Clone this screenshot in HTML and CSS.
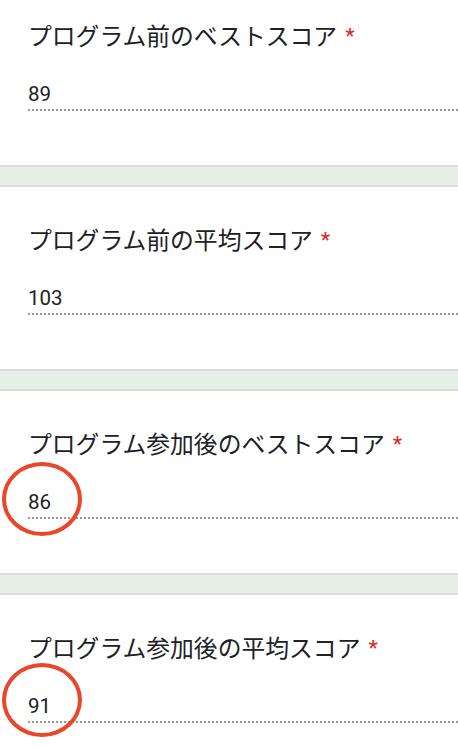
FILE: index.html
```html
<!doctype html>
<html lang="ja">
<head>
    <meta charset="utf-8">
    <title>スコア入力</title>
    <link rel="stylesheet" href="styles.css">
</head>
<body>
    <div class="form-list">
        <div class="question">
            <div class="label">プログラム前のベストスコア<span class="req">*</span></div>
            <div class="field">89</div>
        </div>
        <div class="question">
            <div class="label">プログラム前の平均スコア<span class="req">*</span></div>
            <div class="field">103</div>
        </div>
        <div class="question">
            <div class="label">プログラム参加後のベストスコア<span class="req">*</span></div>
            <div class="field">
                <span class="mark"></span>86
            </div>
        </div>
        <div class="question">
            <div class="label">プログラム参加後の平均スコア<span class="req">*</span></div>
            <div class="field">
                <span class="mark mark-low"></span>91
            </div>
        </div>
    </div>
</body>
</html>
```

FILE: styles.css
```css
body {
    margin: 0;
    background: #fff;
    overflow: hidden;
}

.form-list {
    display: flex;
    flex-direction: column;
    gap: 18px;
    margin-top: -19px;
    background: #e6f0e6;
}

.question {
    background: #fff;
    border-top: 2px solid #dadce0;
    border-bottom: 2px solid #dadce0;
    padding: 36px 0 54px 28px;
}

.label {
    height: 32px;
    font-family: "Noto Sans CJK JP", sans-serif;
    font-size: 23.8px;
    line-height: 32px;
    color: #202124;
    white-space: nowrap;
}

.req {
    margin-left: 8px;
    vertical-align: 2px;
    font-family: Roboto, sans-serif;
    font-size: 21px;
    font-weight: 500;
    color: #d93025;
}

.field {
    position: relative;
    margin-top: 28px;
    height: 30px;
    padding-bottom: 2px;
    line-height: 30px;
    font-family: Roboto, sans-serif;
    font-size: 20.5px;
    color: #202124;
    background: linear-gradient(to right, #999 50%, transparent 50%) left bottom / 4px 2px repeat-x;
}

.mark {
    position: absolute;
    left: -26px;
    top: -25px;
    width: 72px;
    height: 66px;
    border: 4px solid #e8472b;
    border-radius: 50%;
}

.mark-low {
    top: -28px;
}
```
